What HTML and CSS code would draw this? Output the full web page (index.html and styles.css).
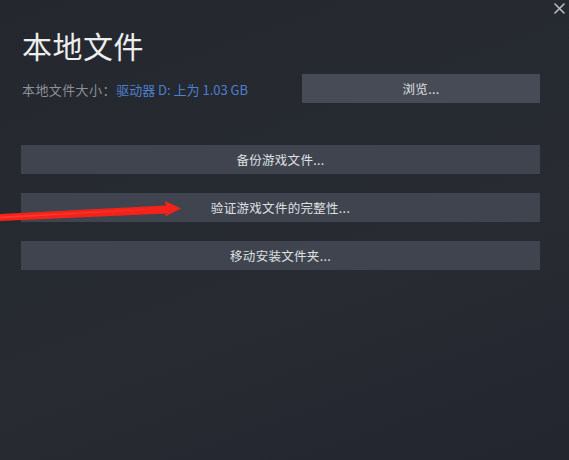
FILE: index.html
```html
<!DOCTYPE html>
<html lang="zh-CN">
<head>
<meta charset="utf-8">
<title>本地文件</title>
<link rel="stylesheet" href="styles.css">
</head>
<body>
<div class="dialog">
  <div class="close" aria-label="关闭">
    <svg width="11" height="11" viewBox="0 0 11 11"><path d="M1 1L10 10M10 1L1 10" stroke="#b9bcc2" stroke-width="1.6" stroke-linecap="round"/></svg>
  </div>
  <h1 class="title">本地文件</h1>
  <div class="size-row">
    <div class="size-label">本地文件大小： <span class="size-value">驱动器 D: 上为 1.03 GB</span></div>
    <button class="btn browse">浏览...</button>
  </div>
  <div class="actions">
    <button class="btn">备份游戏文件...</button>
    <button class="btn">验证游戏文件的完整性...</button>
    <button class="btn">移动安装文件夹...</button>
  </div>
  <svg class="arrow" width="190" height="30" viewBox="0 0 190 30">
    <defs>
      <filter id="soft" x="-5%" y="-30%" width="110%" height="160%">
        <feGaussianBlur stdDeviation="0.6"/>
      </filter>
    </defs>
    <path d="M0 19 L166 10.5 L165 6 L181 13.5 L165 21.5 L166 18.5 L0 26 Z" fill="#f5231b" filter="url(#soft)"/>
    <path d="M0 21.5 L168 13.3 L0 23.5 Z" fill="#ff4a3a" opacity="0.6" filter="url(#soft)"/>
  </svg>
</div>
</body>
</html>
```
FILE: styles.css
```css
html, body {
  margin: 0;
  padding: 0;
}
body {
  width: 569px;
  height: 460px;
  overflow: hidden;
  font-family: "Noto Sans CJK SC", "Noto Sans", sans-serif;
  background: linear-gradient(160deg, #24272e 0%, #262a31 45%, #282b31 60%, #23252f 100%);
}
.dialog {
  position: relative;
  height: 460px;
  box-sizing: border-box;
  padding: 25px 29px 0 21px;
}
.close {
  position: absolute;
  top: 3px;
  right: 4px;
  width: 11px;
  height: 11px;
}
.close svg { display: block; }
.title {
  margin: 0 0 0 1px;
  font-size: 30px;
  font-weight: 400;
  line-height: 40px;
  color: #eceded;
  letter-spacing: 0.5px;
}
.size-row {
  display: flex;
  align-items: center;
  margin-top: 9px;
}
.size-label {
  flex: 1;
  font-size: 13px;
  letter-spacing: 0.4px;
  color: #8d9096;
  padding-left: 1px;
  padding-top: 2px;
}
.size-value {
  color: #4f7fcf;
  letter-spacing: 0;
  margin-left: -3px;
}
.btn {
  display: block;
  border: none;
  margin: 0;
  padding: 0;
  height: 29px;
  background: #3f444f;
  color: #dfe0e2;
  font-family: "Noto Sans CJK SC", "Noto Sans", sans-serif;
  font-size: 12.5px;
  letter-spacing: 0.3px;
  text-align: center;
}
.browse {
  width: 238px;
  background: #464b56;
}
.actions {
  display: flex;
  flex-direction: column;
  gap: 19px;
  margin-top: 42px;
}
.actions .btn {
  width: 100%;
}
.arrow {
  position: absolute;
  left: 0;
  top: 195px;
}
```
